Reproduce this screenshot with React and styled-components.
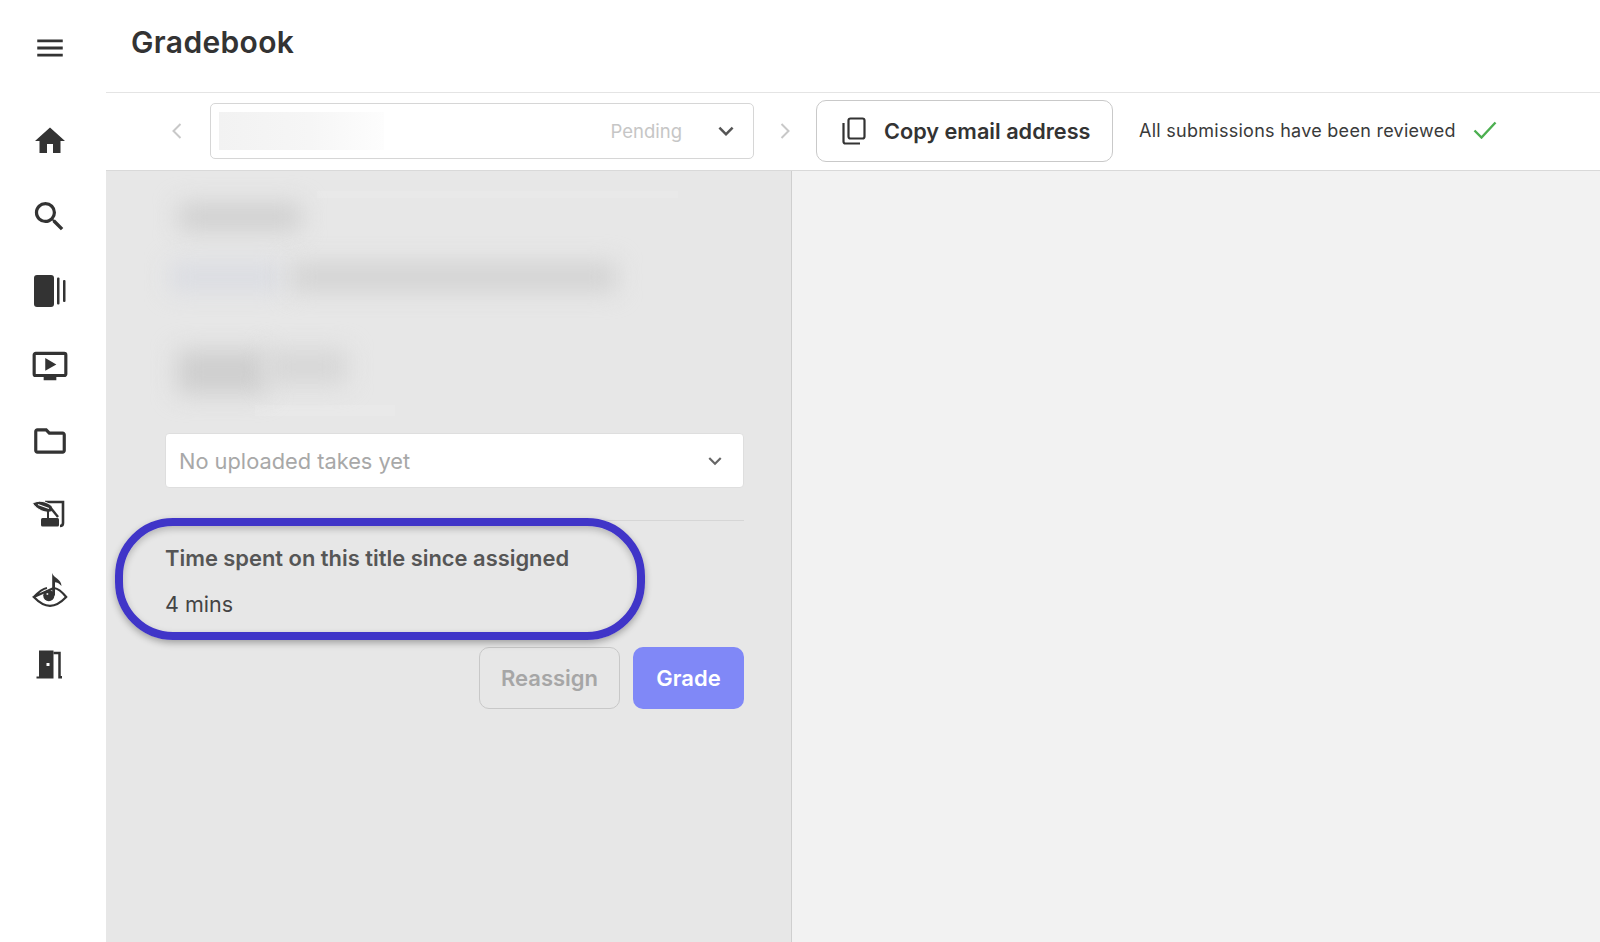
import React from 'react';
import styled, { createGlobalStyle } from 'styled-components';
import { MdMenu, MdHome, MdSearch, MdOndemandVideo, MdOutlineFolder, MdKeyboardArrowDown } from 'react-icons/md';

const GlobalStyle = createGlobalStyle`
  html, body {
    margin: 0;
    height: 100%;
    background: #fff;
    font-family: Inter, "Liberation Sans", sans-serif;
    color: #333;
    overflow: hidden;
  }
  * { box-sizing: border-box; }
`;

const Page = styled.div`
  display: flex;
  width: 1600px;
  height: 942px;
`;

const Sidebar = styled.nav`
  width: 106px;
  flex: none;
  display: flex;
  flex-direction: column;
  align-items: center;
  color: #333;
`;

const MenuSlot = styled.div`
  height: 104px;
  width: 100%;
  padding: 0 7px 8px 0;
  display: flex;
  align-items: center;
  justify-content: center;
`;

const IconSlot = styled.div`
  height: 74.8px;
  width: 100%;
  padding-right: 7px;
  display: flex;
  align-items: center;
  justify-content: center;
`;

const Main = styled.div`
  flex: 1;
  display: flex;
  flex-direction: column;
  min-width: 0;
`;

const Header = styled.header`
  height: 93px;
  flex: none;
  padding: 22px 0 0 25px;
  border-bottom: 1px solid #e4e4e4;
`;

const Title = styled.h1`
  margin: 0;
  font-size: 30px;
  line-height: 40px;
  font-weight: 600;
  letter-spacing: 0.35px;
  color: #333;
`;

const Toolbar = styled.div`
  height: 78px;
  flex: none;
  display: flex;
  align-items: center;
  padding: 0 0 2px 66px;
  border-bottom: 1px solid #d9d9d9;
`;

const Select = styled.div`
  width: 544px;
  height: 56px;
  margin: 0 26px 0 28px;
  padding: 0 12px 0 8px;
  display: flex;
  align-items: center;
  background: #fff;
  border: 1px solid #d6d6d6;
  border-radius: 5px;
`;

const RedactedName = styled.div`
  width: 165px;
  height: 38px;
  background: linear-gradient(90deg, #f2f2f2, #f6f6f6 55%, #fdfdfd);
`;

const Pending = styled.span`
  margin-left: auto;
  margin-right: 29px;
  font-size: 18.5px;
  color: #c6c6c6;
`;

const CopyButton = styled.button`
  width: 297px;
  height: 62px;
  margin-left: 26px;
  padding: 0 0 0 25px;
  display: flex;
  align-items: center;
  gap: 18px;
  background: #fff;
  border: 1px solid #c9c9c9;
  border-radius: 10px;
  font-family: inherit;
  font-size: 21.7px;
  font-weight: 600;
  color: #333;
`;

const Status = styled.div`
  margin: 0 0 1px 26px;
  display: flex;
  align-items: center;
  gap: 17px;
  font-size: 18px;
  letter-spacing: 0.27px;
  color: #3a3a3a;
`;

const Body = styled.div`
  flex: 1;
  display: flex;
  min-height: 0;
`;

const Panel = styled.section`
  position: relative;
  width: 686px;
  flex: none;
  padding: 0 47px 0 59px;
  background: #e7e7e7;
  border-right: 1px solid #cfcfcf;
`;

const Viewer = styled.div`
  flex: 1;
  background: #f2f2f2;
`;

const BlurRow = styled.div`
  display: flex;
  gap: ${(p) => p.$gap || 0}px;
  margin-top: ${(p) => p.$top}px;
  margin-left: ${(p) => p.$left || 0}px;
`;

const Blur = styled.div`
  width: ${(p) => p.$w}px;
  height: ${(p) => p.$h}px;
  background: ${(p) => p.$tone};
  filter: blur(${(p) => p.$blur || 12}px);
`;

const FaintBand = styled.div`
  width: ${(p) => p.$w}px;
  height: ${(p) => p.$h}px;
  margin-top: ${(p) => p.$top}px;
  margin-left: ${(p) => p.$left}px;
  background: #e9e9e9;
`;

const TakesSelect = styled.div`
  height: 55px;
  margin-top: 17px;
  padding: 0 15px 0 13px;
  display: flex;
  align-items: center;
  justify-content: space-between;
  background: #fff;
  border: 1px solid #dedede;
  border-radius: 4px;
  font-size: 21.8px;
  color: #a8a8a8;
`;

const Divider = styled.div`
  height: 1px;
  margin-top: 32px;
  background: #d6d6d6;
`;

const TimeLabel = styled.div`
  margin-top: 25px;
  font-size: 21.9px;
  line-height: 24px;
  font-weight: 600;
  color: #565656;
`;

const TimeValue = styled.div`
  margin-top: 22px;
  font-size: 21.5px;
  line-height: 24px;
  color: #444;
`;

const Actions = styled.div`
  margin-top: 31px;
  display: flex;
  justify-content: flex-end;
  gap: 13px;
`;

const Button = styled.button`
  width: ${(p) => p.$w}px;
  height: 62px;
  padding: 0;
  border-radius: 10px;
  font-family: inherit;
  font-size: 22px;
  font-weight: 600;
  color: ${(p) => (p.$primary ? '#fff' : '#a6a6a6')};
  background: ${(p) => (p.$primary ? '#8088f7' : 'transparent')};
  border: ${(p) => (p.$primary ? 'none' : '1px solid #c8c8c8')};
`;

const Highlight = styled.div`
  position: absolute;
  left: 9px;
  top: 347px;
  width: 530px;
  height: 122px;
  border: 8px solid #4035c8;
  border-radius: 58px;
  box-shadow: 0 3px 7px rgba(0, 0, 0, 0.3), inset 0 3px 7px rgba(0, 0, 0, 0.22);
  pointer-events: none;
`;

const Chevron = ({ right }) => (
  <svg width="10" height="18" viewBox="0 0 10 18" fill="none" stroke="#c8c8c8" strokeWidth="2">
    <path d={right ? 'M1.5 2L8.5 9L1.5 16' : 'M8.5 2L1.5 9L8.5 16'} />
  </svg>
);

const BookIcon = () => (
  <svg width="36" height="34" viewBox="0 0 36 34" fill="#333">
    <rect x="2" y="1" width="20" height="32" rx="3" />
    <rect x="25" y="3.5" width="2.5" height="27" rx="1" />
    <rect x="31" y="6" width="2.5" height="22" rx="1" />
  </svg>
);

const QuillIcon = () => (
  <svg width="36" height="36" viewBox="0 1 36 36" fill="none" overflow="visible">
    <path d="M13 6H31V27C31 29 30 30 28 30" stroke="#333" strokeWidth="2.6" />
    <rect x="9" y="22" width="18" height="8.5" rx="1.5" fill="#333" />
    <path d="M0.5 7.5C6 3.5 14 5 20 10L20.5 15.5C13 18 5 13.5 0.5 7.5Z" fill="#333" stroke="#fff" strokeWidth="1" />
    <path d="M6 8.5L17 12.5" stroke="#fff" strokeWidth="1.3" />
    <path d="M18 11L26 21" stroke="#333" strokeWidth="2.4" />
    <path d="M16 15V23" stroke="#333" strokeWidth="2" />
  </svg>
);

const EyeNoteIcon = () => (
  <svg width="36" height="36" viewBox="0 0 36 36" fill="none" overflow="visible">
    <path d="M1.8 25C8 18.5 12 16.5 15 16M22 16C25 16.5 29 18.5 34.2 25C28 31.5 23 33.8 18 33.8C13 33.8 8 31.5 1.8 25Z" stroke="#333" strokeWidth="2.2" />
    <circle cx="16.8" cy="23.6" r="5.6" fill="#333" />
    <circle cx="15.4" cy="22" r="1" fill="#ddd" />
    <path d="M20.2 23.6V1C21.5 6 29.5 7 29.5 14C27 11 25 10.2 23 10.2V23.6Z" fill="#333" />
  </svg>
);

const DoorIcon = () => (
  <svg width="32" height="34" viewBox="0 0 32 34" fill="none">
    <path d="M5 2.5H19.5V30.5H2.5V28.5H5Z" fill="#333" />
    <rect x="12.5" y="15" width="3" height="3" fill="#fff" />
    <path d="M19.5 5H25.5V29.3H28" stroke="#333" strokeWidth="2.5" />
  </svg>
);

const CopyIcon = () => (
  <svg width="24" height="28" viewBox="0 0 24 28" fill="none" stroke="#333" strokeWidth="2.2">
    <rect x="6.5" y="1.5" width="16" height="20" rx="2" />
    <path d="M1.5 6V24.5C1.5 25.6 2.4 26.5 3.5 26.5H18" />
  </svg>
);

const CheckIcon = () => (
  <svg width="24" height="18" viewBox="0 0 24 18" fill="none" stroke="#4caf50" strokeWidth="2.4">
    <path d="M1.5 9.5L8.5 16.5L22.5 1.5" />
  </svg>
);

export default function App() {
  return (
    <Page>
      <GlobalStyle />
      <Sidebar>
        <MenuSlot>
          <MdMenu size={34} />
        </MenuSlot>
        <IconSlot><MdHome size={36} /></IconSlot>
        <IconSlot><MdSearch size={39} /></IconSlot>
        <IconSlot><BookIcon /></IconSlot>
        <IconSlot><MdOndemandVideo size={38} /></IconSlot>
        <IconSlot><MdOutlineFolder size={38} /></IconSlot>
        <IconSlot><QuillIcon /></IconSlot>
        <IconSlot><EyeNoteIcon /></IconSlot>
        <IconSlot><DoorIcon /></IconSlot>
      </Sidebar>
      <Main>
        <Header>
          <Title>Gradebook</Title>
        </Header>
        <Toolbar>
          <Chevron />
          <Select>
            <RedactedName />
            <Pending>Pending</Pending>
            <MdKeyboardArrowDown size={30} color="#555" />
          </Select>
          <Chevron right />
          <CopyButton>
            <CopyIcon />
            Copy email address
          </CopyButton>
          <Status>
            All submissions have been reviewed
            <CheckIcon />
          </Status>
        </Toolbar>
        <Body>
          <Panel>
            <FaintBand $top={20} $left={152} $w={361} $h={7} />
            <BlurRow $top={6} $left={14}>
              <Blur $w={122} $h={26} $tone="#cecece" />
            </BlurRow>
            <BlurRow $top={33} $left={5} $gap={9}>
              <Blur $w={112} $h={28} $tone="#dadce2" />
              <Blur $w={325} $h={28} $tone="#d2d2d2" />
            </BlurRow>
            <BlurRow $top={59} $left={12} $gap={0}>
              <Blur $w={90} $h={44} $tone="#cecece" />
              <Blur $w={80} $h={34} $tone="#d6d6d6" />
            </BlurRow>
            <FaintBand $top={11} $left={90} $w={140} $h={11} />
            <TakesSelect>
              No uploaded takes yet
              <MdKeyboardArrowDown size={26} color="#666" />
            </TakesSelect>
            <Divider />
            <TimeLabel>Time spent on this title since assigned</TimeLabel>
            <TimeValue>4 mins</TimeValue>
            <Actions>
              <Button $w={141}>Reassign</Button>
              <Button $w={111} $primary>Grade</Button>
            </Actions>
            <Highlight />
          </Panel>
          <Viewer />
        </Body>
      </Main>
    </Page>
  );
}
